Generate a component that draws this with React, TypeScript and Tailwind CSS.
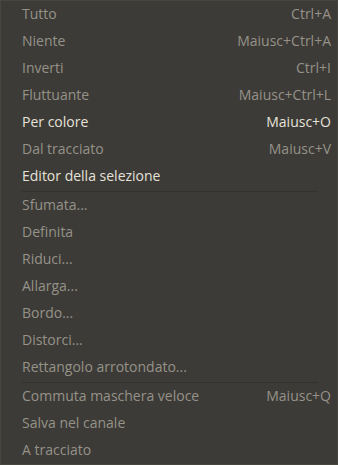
import React from 'react';

type Item =
  | { kind: 'item'; label: string; shortcut?: string; enabled?: boolean }
  | { kind: 'sep' };

const items: Item[] = [
  { kind: 'item', label: 'Tutto', shortcut: 'Ctrl+A' },
  { kind: 'item', label: 'Niente', shortcut: 'Maiusc+Ctrl+A' },
  { kind: 'item', label: 'Inverti', shortcut: 'Ctrl+I' },
  { kind: 'item', label: 'Fluttuante', shortcut: 'Maiusc+Ctrl+L' },
  { kind: 'item', label: 'Per colore', shortcut: 'Maiusc+O', enabled: true },
  { kind: 'item', label: 'Dal tracciato', shortcut: 'Maiusc+V' },
  { kind: 'item', label: 'Editor della selezione', enabled: true },
  { kind: 'sep' },
  { kind: 'item', label: 'Sfumata...' },
  { kind: 'item', label: 'Definita' },
  { kind: 'item', label: 'Riduci...' },
  { kind: 'item', label: 'Allarga...' },
  { kind: 'item', label: 'Bordo...' },
  { kind: 'item', label: 'Distorci...' },
  { kind: 'item', label: 'Rettangolo arrotondato...' },
  { kind: 'sep' },
  { kind: 'item', label: 'Commuta maschera veloce', shortcut: 'Maiusc+Q' },
  { kind: 'item', label: 'Salva nel canale' },
  { kind: 'item', label: 'A tracciato' },
];

export default function App() {
  return (
    <div
      className="w-[338px] h-[465px] bg-[#3c3b37] border border-[#48473f] flex flex-col text-[14px] leading-none select-none"
      style={{ fontFamily: '"Open Sans", "DejaVu Sans", sans-serif' }}
    >
      {items.map((it, i) =>
        it.kind === 'sep' ? (
          <div key={i} className="h-[2px] flex items-end pl-[21px] pr-[19px]">
            <div className="w-full h-px bg-[#33322e]" />
          </div>
        ) : (
          <div
            key={i}
            className={`h-[27px] flex items-center justify-between pl-[21px] pr-[6px] pb-px ${
              it.enabled ? 'text-[#e6e2da]' : 'text-[#969289]'
            }`}
          >
            <span>{it.label}</span>
            {it.shortcut && <span>{it.shortcut}</span>}
          </div>
        )
      )}
    </div>
  );
}
